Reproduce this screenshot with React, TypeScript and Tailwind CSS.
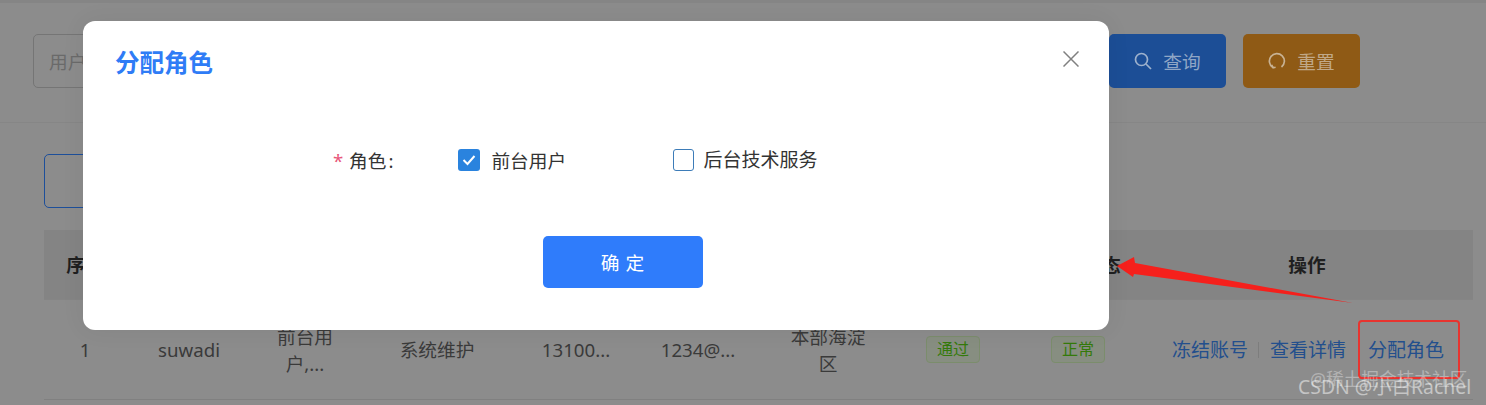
import React from "react";

const font = { fontFamily: '"Noto Sans", "Noto Sans CJK SC", sans-serif' };
const cols = "grid grid-cols-[82px_126px_106px_158px_120px_124px_136px_114px_136px_327px] items-center";

function Tag({ children }: { children: React.ReactNode }) {
  return (
    <span className="flex h-[27px] w-[54px] items-center justify-center rounded-[4px] border border-[#7b8d6c] bg-[#878e81] text-[16px] text-[#347a0a]">
      {children}
    </span>
  );
}

export default function App() {
  return (
    <div
      style={font}
      className="relative h-[405px] w-[1486px] overflow-hidden bg-[#8c8c8c] text-[18.7px] leading-[27px] text-[#3a3a3a]"
    >
      <div className="h-[3px] bg-[#858585]" />
      <div className="flex h-[120px] items-start justify-between border-b border-[#868686] pt-[31px] pl-[33px] pr-[126px]">
        <div className="flex h-[54px] w-[400px] items-center rounded-[5px] border border-[#757575] px-[15px] text-[#6a6a6a]">
          用户名
        </div>
        <div className="flex gap-[17px]">
          <div className="flex h-[54px] w-[117px] items-center justify-center gap-[11px] rounded-[5px] bg-[#1c4e96] text-[#8fa6c6]">
            <svg width="18" height="18" viewBox="0 0 18 18" fill="none" stroke="#9db1cd" strokeWidth="1.7">
              <circle cx="7.5" cy="7.5" r="6" />
              <path d="M12 12l5 5" />
            </svg>
            查询
          </div>
          <div className="flex h-[54px] w-[117px] items-center justify-center gap-[11px] rounded-[5px] bg-[#8f5a15] text-[#c0a888]">
            <svg width="18" height="18" viewBox="0 0 18 18" fill="none" stroke="#c8b294" strokeWidth="1.7">
              <path d="M5 15.5A7.5 7.5 0 1 1 13.5 15" />
              <path d="M3.6 12.8l1.6 3 2.4-.6" />
            </svg>
            重置
          </div>
        </div>
      </div>

      <div className="px-[44px] pr-[13px] pt-[31px]">
        <div className="h-[54px] w-[160px] rounded-[5px] border border-[#1d4f9a]" />
        <div className={`${cols} mt-[22px] h-[70px] border-b border-[#858585] bg-[#848484] text-center font-bold text-[#1f1f1f]`}>
          <div>序号</div>
          <div>用户名</div>
          <div>角色</div>
          <div>部门</div>
          <div>手机号</div>
          <div>邮箱</div>
          <div>地址</div>
          <div>审核</div>
          <div className="pl-[48px]">状态</div>
          <div className="pr-[5px]">操作</div>
        </div>
        <div className={`${cols} h-[100px] border-b border-[#808080] text-center`}>
          <div>1</div>
          <div>suwadi</div>
          <div className="px-[22px]">前台用户,...</div>
          <div>系统维护</div>
          <div>13100...</div>
          <div>1234@...</div>
          <div className="px-[28px]">本部海淀区</div>
          <div className="flex justify-center"><Tag>通过</Tag></div>
          <div className="flex justify-center"><Tag>正常</Tag></div>
          <div className="flex items-center justify-end pr-[29px] pt-[1px] text-[19px] text-[#234f8d]">
            <span>冻结账号</span>
            <span className="ml-[10px] mr-[11px] h-[16px] w-px bg-[#7d7d7d]" />
            <span>查看详情</span>
            <span className="ml-[22px]">分配角色</span>
          </div>
        </div>
      </div>

      {/* annotations */}
      <svg className="absolute left-0 top-0" width="1486" height="405" viewBox="0 0 1486 405">
        <polygon points="1117,266 1134,257 1135,263 1353,303 1134,274 1133,277" fill="#f5201c" />
      </svg>
      <div className="absolute left-[1358px] top-[320px] h-[59px] w-[102px] rounded-[4px] border-2 border-[#e8342f]" />
      <div className="absolute left-[1310px] top-[366px] whitespace-nowrap text-[17.7px] text-white/35">@稀土掘金技术社区</div>
      <div className="absolute left-[1298px] top-[373px] whitespace-nowrap text-[19.4px] text-white/50">CSDN @小白Rachel</div>

      {/* dialog */}
      <div className="absolute left-[83px] top-[21px] flex h-[309px] w-[1026px] flex-col rounded-[12px] bg-white shadow-[0_0_24px_rgba(0,0,0,0.06)]">
        <div className="flex items-start justify-between pl-[32px] pr-[30px] pt-[24px]">
          <div className="text-[24.5px] font-bold leading-[36px] text-[#2f7cf6]">分配角色</div>
          <svg className="mt-[6px]" width="16" height="16" viewBox="0 0 16 16" fill="none" stroke="#808080" strokeWidth="1.5">
            <path d="M0.5 0.5l15 15M15.5 0.5l-15 15" />
          </svg>
        </div>
        <div className="mt-[65px] flex h-[28px] items-center text-[#333]">
          <span className="ml-[250px] w-[16px] text-[#e8567a]">*</span>
          <span>角色</span>
          <span className="ml-[2px] w-[70px]">:</span>
          <span className="flex h-[22px] w-[22px] items-center justify-center rounded-[3px] bg-[#2a83de]">
            <svg width="14" height="12" viewBox="0 0 14 12" fill="none" stroke="#fff" strokeWidth="2">
              <path d="M1.5 6l4 4 7-8" />
            </svg>
          </span>
          <span className="ml-[11px] w-[182px]">前台用户</span>
          <span className="h-[22px] w-[21px] rounded-[3px] border border-[#3d7cb8]" />
          <span className="ml-[9px] text-[19px]">后台技术服务</span>
        </div>
        <div className="mt-[62px] ml-[460px] flex h-[52px] w-[160px] items-center justify-center rounded-[5px] bg-[#2f7cfb] pl-[5px] tracking-[6px] text-white">
          确定
        </div>
      </div>
    </div>
  );
}
